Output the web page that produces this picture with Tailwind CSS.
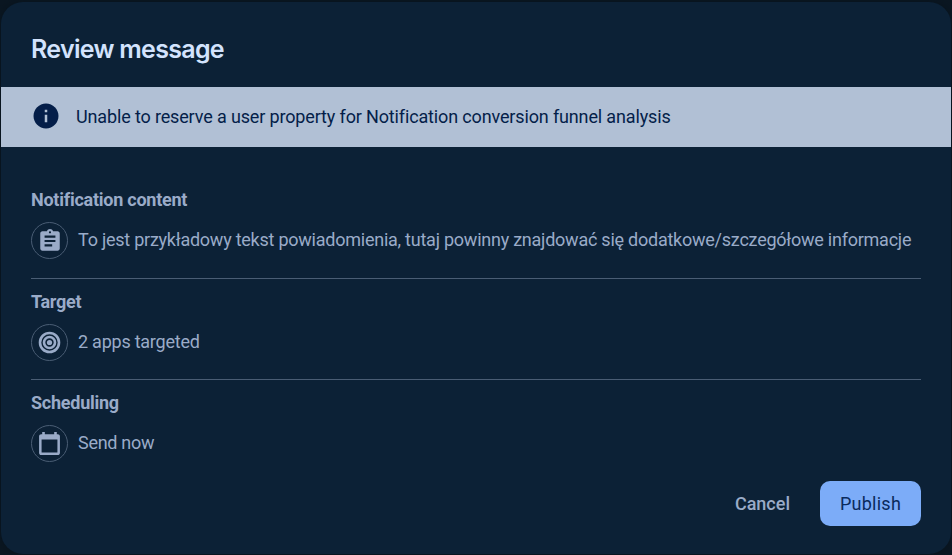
<!DOCTYPE html>
<html lang="en">
<head>
<meta charset="utf-8">
<title>Review message</title>
<script src="https://cdn.jsdelivr.net/npm/@tailwindcss/browser@4"></script>
</head>
<body class="h-[555px] overflow-hidden bg-[#0b1722] px-px pt-0.5 font-['Roboto',sans-serif] text-lg text-[#9aabc8]">
<main class="flex h-[552px] w-[950px] flex-col overflow-hidden rounded-[22px] bg-[#0c2136] shadow-[0_0_10px_#08131d]">
  <header class="flex h-[85px] shrink-0 items-center px-[30px] pt-[9px]">
    <h1 class="whitespace-nowrap font-['Inter',sans-serif] text-[25px] font-semibold leading-8 tracking-[-0.7px] text-[#d3e3fd]">Review message</h1>
  </header>
  <div class="flex h-[60px] shrink-0 items-center bg-[#b1c0d5] pl-[30px] text-[#041e49]">
    <svg class="-mt-0.5 size-[30px]" viewBox="0 0 24 24" fill="currentColor"><path d="M12 2C6.48 2 2 6.48 2 12s4.480 10 10 10 10-4.480 10-10S17.520 2 12 2z"/><path fill="#b1c0d5" d="M11 11h2v6h-2zM11 7h2v2h-2z"/></svg>
    <p class="ml-[15px] whitespace-nowrap tracking-[-0.145px]">Unable to reserve a user property for Notification conversion funnel analysis</p>
  </div>
  <section class="mx-[30px] mt-[39px] h-[93px] shrink-0 border-b border-[#4a5d74]">
    <h2 class="h-[27px] font-bold leading-7 tracking-[-0.25px]">Notification content</h2>
    <div class="mt-[9px] flex items-center">
      <span class="flex size-[37px] shrink-0 items-center justify-center rounded-full border border-[#4a5d74]">
        <svg class="size-[26px] shrink-0" viewBox="0 0 24 24" fill="currentColor"><path d="M19 3h-4.180C14.400 1.840 13.300 1 12 1c-1.300 0-2.400.84-2.820 2H5c-1.100 0-2 .9-2 2v14c0 1.100.9 2 2 2h14c1.100 0 2-.9 2-2V5c0-1.100-.9-2-2-2zm-7 0c.55 0 1 .45 1 1s-.45 1-1 1-1-.45-1-1 .45-1 1-1zm2 14H7v-2h7v2zm3-4H7v-2h10v2zm0-4H7V7h10v2z"/></svg>
      </span>
      <p class="ml-2.5 whitespace-nowrap pb-0.5 tracking-[-0.24px]">To jest przykładowy tekst powiadomienia, tutaj powinny znajdować się dodatkowe/szczegółowe informacje</p>
    </div>
  </section>
  <section class="mx-[30px] h-[101px] shrink-0 border-b border-[#4a5d74] pt-[9px]">
    <h2 class="h-[27px] font-bold leading-7 tracking-[-0.3px]">Target</h2>
    <div class="mt-[9px] flex items-center">
      <span class="flex size-[37px] shrink-0 items-center justify-center rounded-full border border-[#4a5d74]">
        <svg class="size-[23px] shrink-0" viewBox="0 0 23 23" fill="none" stroke="currentColor" stroke-width="2.600"><circle cx="11.500" cy="11.500" r="9.500"/><circle cx="11.500" cy="11.500" r="5.500"/><circle cx="11.500" cy="11.500" r="2.600" fill="currentColor" stroke="none"/></svg>
      </span>
      <p class="ml-2.5 whitespace-nowrap pb-0.5 tracking-[-0.24px]">2 apps targeted</p>
    </div>
  </section>
  <section class="mx-[30px] h-[101px] shrink-0 pt-[9px]">
    <h2 class="h-[27px] font-bold leading-7 tracking-[-0.25px]">Scheduling</h2>
    <div class="mt-[9px] flex items-center">
      <span class="flex size-[37px] shrink-0 items-center justify-center rounded-full border border-[#4a5d74]">
        <svg class="size-[25px] shrink-0" viewBox="0 0 24 24" fill="currentColor"><path d="M20 3h-1V1h-2.500v2h-9V1H5v2H4c-1.100 0-2 .9-2 2v16c0 1.100.9 2 2 2h16c1.100 0 2-.9 2-2V5c0-1.100-.9-2-2-2zm-.4 17.700H4.400V8.200h15.200z"/></svg>
      </span>
      <p class="ml-2.5 whitespace-nowrap pb-0.5 tracking-[-0.3px]">Send now</p>
    </div>
  </section>
  <footer class="mr-[30px] flex shrink-0 items-center justify-end">
    <button class="mr-[30px] font-medium">Cancel</button>
    <button class="h-[45px] w-[101px] rounded-[10px] bg-[#7cacf8] tracking-[0.25px] text-[#0a2a5c]">Publish</button>
  </footer>
</main>
</body>
</html>
